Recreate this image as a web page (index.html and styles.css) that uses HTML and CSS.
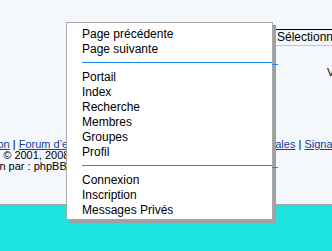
FILE: index.html
```html
<!DOCTYPE html>
<html lang="fr">
  <head>
    <meta charset="UTF-8" />
    <title>Menu</title>
    <link rel="stylesheet" href="styles.css">
  </head>
  <body>
    <div class="page">
      <div class="jumpbox">Sélectionner un forum</div>
      <div class="perms">Vous ne pouvez pas poster</div>
      <div class="footer">
        <div class="foot-row row-links">
          <span class="left-links"><a href="#">Administration</a> | <a href="#">Forum d’entraide</a></span>
          <span class="right-links"><a href="#">Mentions légales</a> | <a href="#">Signaler un abus</a></span>
        </div>
        <div class="foot-row row-copy">Powered by phpBB © 2001, 2008 phpBB Group</div>
        <div class="foot-row row-trad">Traduction par : phpBB-fr.com</div>
      </div>
    </div>

    <div class="menu">
      <div class="item">Page précédente</div>
      <div class="item">Page suivante</div>
      <div class="sep"></div>
      <div class="item">Portail</div>
      <div class="item">Index</div>
      <div class="item">Recherche</div>
      <div class="item">Membres</div>
      <div class="item">Groupes</div>
      <div class="item">Profil</div>
      <div class="sep"></div>
      <div class="item">Connexion</div>
      <div class="item">Inscription</div>
      <div class="item">Messages Privés</div>
    </div>
  </body>
</html>
```

FILE: styles.css
```css
* {
  box-sizing: border-box;
}
html,
body {
  overflow: hidden;
}
body {
  margin: 0;
  height: 251px;
  background-color: #1ce3df;
  font-family: "Liberation Sans", Arial, sans-serif;
  color: #000;
}
.page {
  height: 205px;
  background-color: #f4f8fc;
  border-bottom: 1px solid #a4a4a4;
  padding-top: 29px;
}
.jumpbox {
  margin-left: 262px;
  width: 200px;
  height: 17px;
  padding-left: 15px;
  border-top: 1px solid #000;
  border-bottom: 1px solid #c4c4c4;
  font-size: 12px;
  line-height: 15px;
  white-space: nowrap;
}
.perms {
  margin-top: 20px;
  margin-left: 327px;
  font-size: 11px;
  line-height: 13px;
  white-space: nowrap;
}
.footer {
  margin-top: 60px;
  font-size: 11px;
  line-height: 11px;
  white-space: nowrap;
}
.foot-row {
  height: 11px;
}
.row-links {
  display: flex;
}
.left-links {
  margin-left: -60px;
  flex-shrink: 0;
}
.right-links {
  margin-left: 111px;
  flex-shrink: 0;
}
.footer a {
  color: #0d3fa6;
  text-decoration: underline;
}
.row-copy {
  margin-left: -94px;
}
.row-trad {
  margin-left: -46px;
}
.menu {
  position: absolute;
  left: 66px;
  top: 22px;
  width: 207px;
  padding: 4px 0 1px 15px;
  background-color: #fff;
  border: 1px solid #a8a8a8;
  box-shadow: 3px 3px 0 #a0a0a4;
  font-size: 12px;
  line-height: 15px;
}
.item {
  white-space: nowrap;
}
.sep {
  position: relative;
  height: 1px;
  margin: 5px 0 7px 0;
  background-color: #1588f2;
}
.sep::after {
  content: "";
  position: absolute;
  right: -6px;
  top: 2px;
  width: 6px;
  height: 1px;
  background-color: #1588f2;
}
```
